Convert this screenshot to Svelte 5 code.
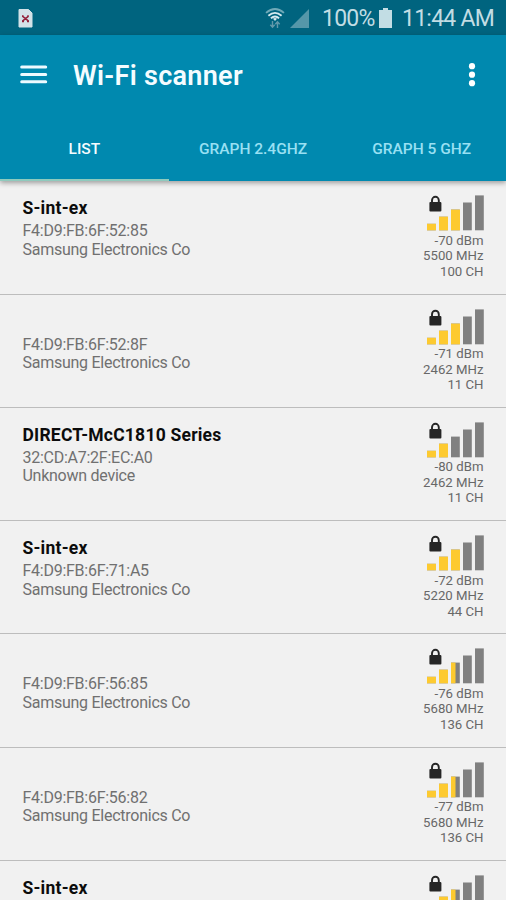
<script>
	const tabs = ["LIST", "GRAPH 2.4GHZ", "GRAPH 5 GHZ"];
	let active = $state(0);

	// level: how many of the five bars are filled
	const networks = [
		{ name: "S-int-ex", mac: "F4:D9:FB:6F:52:85", vendor: "Samsung Electronics Co", dbm: -70, mhz: 5500, ch: 100, level: 3 },
		{ name: "", mac: "F4:D9:FB:6F:52:8F", vendor: "Samsung Electronics Co", dbm: -71, mhz: 2462, ch: 11, level: 3 },
		{ name: "DIRECT-McC1810 Series", mac: "32:CD:A7:2F:EC:A0", vendor: "Unknown device", dbm: -80, mhz: 2462, ch: 11, level: 2 },
		{ name: "S-int-ex", mac: "F4:D9:FB:6F:71:A5", vendor: "Samsung Electronics Co", dbm: -72, mhz: 5220, ch: 44, level: 3 },
		{ name: "", mac: "F4:D9:FB:6F:56:85", vendor: "Samsung Electronics Co", dbm: -76, mhz: 5680, ch: 136, level: 2.5 },
		{ name: "", mac: "F4:D9:FB:6F:56:82", vendor: "Samsung Electronics Co", dbm: -77, mhz: 5680, ch: 136, level: 2.5 },
		{ name: "S-int-ex", level: 2.5 }
	];

	const bars = [0, 1, 2, 3, 4];

	function fill(level, i) {
		return Math.max(0, Math.min(1, level - i)) * 9;
	}
</script>

<main class="app">
	<div class="status">
		<svg class="sim" width="15" height="19" viewBox="0 0 15 19">
			<path d="M1 .5h9.5L14 4v14H1z" fill="#d3e2e8" stroke="#d3e2e8" stroke-linejoin="round" />
			<path d="M4.4 7.2l6.2 5M10.6 7.2l-6.2 5M4 12.4h2M9 12.4h2M4 7h1.6M9.2 7h1.6" stroke="#93203a" stroke-width="1.5" />
		</svg>
		<svg class="wifi" width="20" height="21" viewBox="0 0 20 21" fill="none">
			<path d="M1 4.8Q10-2.8 19 4.8" stroke="#6fa9b8" stroke-width="1.7" />
			<path d="M3.4 7.7Q10 2 16.6 7.7M5.9 10.3Q10 6.8 14.1 10.3" stroke="#d5eaf0" stroke-width="1.8" />
			<path d="M8 10.7q2-1.4 4 0l-2 2.4z" fill="#d5eaf0" />
			<path d="M7.5 13v6M5.3 16.8l2.2 2.4 2.2-2.4M12.5 20v-6M10.3 16.2l2.2-2.4 2.2 2.4" stroke="#6299aa" stroke-width="1.4" />
		</svg>
		<svg class="cell" width="19" height="19" viewBox="0 0 19 19">
			<path d="M19 0v19H0z" fill="#5597a9" />
		</svg>
		<span class="percent">100%</span>
		<svg class="battery" width="13" height="20" viewBox="0 0 13 20">
			<path d="M4 0h5v2h4v18H0V2h4z" fill="#c2dde4" />
		</svg>
		<span class="time">11:44 AM</span>
	</div>

	<header>
		<div class="toolbar">
			<svg width="28" height="20" viewBox="0 0 28 20">
				<path d="M1.7 2h24M1.7 9.4h24M1.7 16.8h24" stroke="#eefaff" stroke-width="3" stroke-linecap="round" />
			</svg>
			<h1>Wi-Fi scanner</h1>
			<svg class="more" width="8" height="24" viewBox="0 0 8 24" fill="#fff">
				<circle cx="4" cy="3.2" r="3.1" />
				<circle cx="4" cy="11.7" r="3.1" />
				<circle cx="4" cy="20.2" r="3.1" />
			</svg>
		</div>
		<nav>
			{#each tabs as tab, i}
				<button class:active={active === i} onclick={() => (active = i)}>{tab}</button>
			{/each}
		</nav>
	</header>

	<ul>
		{#each networks as n}
			<li>
				<div class="info">
					<h2>{n.name}</h2>
					{#if n.mac}
						<p>{n.mac}</p>
						<p>{n.vendor}</p>
					{/if}
				</div>
				<div class="signal">
					<svg width="57" height="36" viewBox="0 0 57 36">
						{#each bars as i}
							<rect x={i * 12} y={28.8 - i * 7.1} width="8.8" height={6.5 + i * 7.1} fill="#808080" />
							<rect x={i * 12} y={28.8 - i * 7.1} width={fill(n.level, i)} height={6.5 + i * 7.1} fill="#fdca30" />
						{/each}
						<rect x="2.4" y="7" width="12" height="9.6" rx="1" fill="#262626" />
						<path d="M5 8V5.2a3.4 3.4 0 0 1 6.8 0V8" fill="none" stroke="#262626" stroke-width="1.9" />
					</svg>
					{#if n.dbm}
						<p>{n.dbm} dBm</p>
						<p>{n.mhz} MHz</p>
						<p>{n.ch} CH</p>
					{/if}
				</div>
			</li>
		{/each}
	</ul>
</main>

<style>
:global(body) {
  margin: 0;
}

.app {
  display: flex;
  flex-direction: column;
  height: 900px;
  overflow: hidden;
  background: #f1f1f1;
  font-family: Roboto, sans-serif;
}

h1, h2, p, ul {
  margin: 0;
  padding: 0;
}

svg {
  display: block;
  flex: none;
}

.status {
  display: flex;
  align-items: center;
  box-sizing: border-box;
  flex: none;
  height: 35px;
  padding: 1px 12px 0 18px;
  background: #00647f;
  color: #c2dde4;
  font-size: 23px;
  letter-spacing: -0.75px;
  white-space: nowrap;
}

.wifi {
  margin-left: auto;
}

.cell {
  margin-left: 5px;
}

.percent {
  margin-left: 13px;
  width: 53px;
}

.battery {
  margin-left: 4px;
}

.time {
  margin-left: 10px;
  width: 92px;
}

header {
  position: relative;
  flex: none;
  height: 146px;
  background: #0089af;
  box-shadow: 0 2px 5px rgba(0, 0, 0, 0.35);
}

.toolbar {
  display: flex;
  align-items: center;
  height: 79px;
  padding: 0 30px 0 20px;
}

h1 {
  margin-left: 25px;
  padding-top: 3px;
  color: #f4fcff;
  font-size: 27px;
  font-weight: 600;
  letter-spacing: 0.3px;
}

.more {
  margin-left: auto;
}

nav {
  display: flex;
  height: 67px;
}

button {
  flex: 1 1 0;
  padding: 4px 0 0;
  border: 0;
  border-bottom: 2.5px solid transparent;
  background: none;
  color: #99e0f3;
  font-family: inherit;
  font-size: 15.5px;
  font-weight: 500;
}

button.active {
  border-color: #8fcabd;
  color: #f4fcff;
}

ul {
  padding-top: 0.4px;
  list-style: none;
}

li {
  display: flex;
  justify-content: space-between;
  box-sizing: border-box;
  height: 113.25px;
  padding: 14px 22px 0 22.5px;
  border-bottom: 1px solid #bdbdbd;
}

.info {
  padding-top: 3px;
}

h2 {
  height: 24px;
  color: #0c0c0c;
  font-size: 17.5px;
  font-weight: 700;
  letter-spacing: 0.22px;
  line-height: 21px;
}

.info p {
  color: #707070;
  font-size: 16px;
  letter-spacing: -0.26px;
  line-height: 18.5px;
}

.signal {
  display: flex;
  flex-direction: column;
  align-items: flex-end;
  color: #686868;
  font-size: 13.2px;
  line-height: 15.5px;
}

.signal p {
  margin-right: 0.5px;
}

.signal svg {
  margin-bottom: 1.5px;
}
</style>
